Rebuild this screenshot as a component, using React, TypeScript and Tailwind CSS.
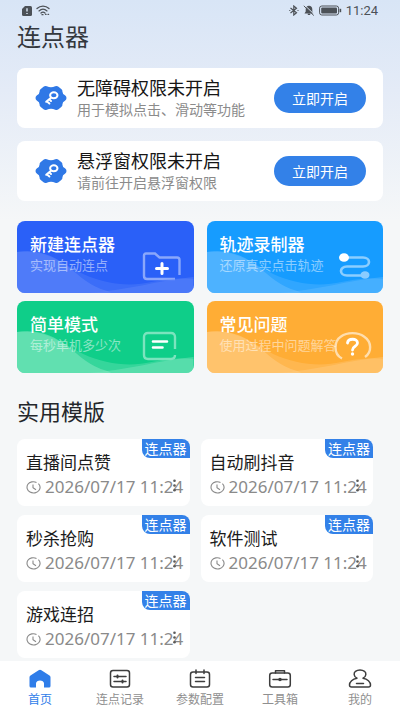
import React from "react";

type TileProps = {
  title: string;
  note: string;
  color: string;
  wave: string;
  icon: React.ReactNode;
};

const permissions = [
  { title: "无障碍权限未开启", note: "用于模拟点击、滑动等功能" },
  { title: "悬浮窗权限未开启", note: "请前往开启悬浮窗权限" },
];

const templates = ["直播间点赞", "自动刷抖音", "秒杀抢购", "软件测试", "游戏连招"];

const StatusBar = () => (
  <div className="flex h-5 items-center justify-between pt-px pr-[5px] pl-[5px] text-[#4c5157]">
    <div className="flex items-center gap-1">
      <svg width="10" height="10" viewBox="0 0 10 10">
        <path d="M3 0h5.500a1.500 1.500 0 0 1 1.500 1.500v7A1.500 1.500 0 0 1 8.500 10h-7A1.500 1.500 0 0 1 0 8.500V3z" fill="currentColor" />
        <path d="M5 2.300v3.200M5 6.900v1.200" stroke="#dde8f6" strokeWidth="1.400" />
      </svg>
      <svg width="15" height="11" viewBox="0 0 15 11" fill="none" stroke="currentColor" strokeWidth="1.300" strokeLinecap="round">
        <path d="M1 3.600C4.500.4 9.500.4 13 3.600M3 5.900c2.400-2.100 5.600-2.100 8 0M5 8c1.200-1 2.800-1 4 0" />
        <path d="M6 9.700h1M9.500 9.300h.6M12 9.300h.6" />
      </svg>
    </div>
    <div className="flex items-center gap-1">
      <svg width="10" height="11" viewBox="0 0 10 11" fill="none" stroke="currentColor" strokeWidth="1.200">
        <path d="M1.500 3l6 4.800L4.800 10V1l2.700 2.200-6 4.800" />
        <path d="M.3 5.500h1M8.500 5.500h1" />
      </svg>
      <svg width="12" height="11" viewBox="0 0 12 11">
        <path d="M6 .8c2 0 3.300 1.400 3.300 3.400v2.300l1.200 1.900h-9l1.200-1.900V4.200C2.700 2.200 4 .8 6 .8z" fill="currentColor" />
        <path d="M4.800 9.300h2.400" stroke="currentColor" strokeWidth="1.400" />
        <path d="M1.800.3l9.800 9.500" stroke="#dde8f6" strokeWidth="1" />
        <path d="M.8.8l10 9.700" stroke="currentColor" strokeWidth="1" />
      </svg>
      <svg width="23" height="11" viewBox="0 0 23 11">
        <rect x=".6" y="1" width="19" height="9" rx="2.200" fill="none" stroke="currentColor" strokeWidth="1" />
        <rect x="2.200" y="2.500" width="15.800" height="6" rx="1" fill="currentColor" />
        <path d="M21.400 3.800v3.400" stroke="currentColor" strokeWidth="1.600" />
      </svg>
      <span className="font-['Roboto',sans-serif] text-[13px] leading-4">11:24</span>
    </div>
  </div>
);

const GearKey = () => (
  <svg className="shrink-0" width="32" height="26" viewBox="0 0 32 26">
    <path
      d="M8.500 1.800Q10 .5 11.800 1.300Q16 3 20.200 1.300Q22 .5 23.500 1.800L26.500 4.200Q27.600 5.200 27.400 6.600Q27.400 9 30 10.300Q31.500 11.300 31.500 13T30 15.700Q27.400 17 27.400 19.400Q27.600 20.800 26.500 21.800L23.500 24.200Q22 25.500 20.200 24.700Q16 23 11.800 24.700Q10 25.500 8.500 24.200L5.500 21.800Q4.400 20.800 4.600 19.400Q4.600 17 2 15.700Q.5 14.700 .5 13T2 10.300Q4.600 9 4.600 6.600Q4.400 5.200 5.500 4.200z"
      fill="#2f78e6"
    />
    <g fill="none" stroke="#fff" strokeWidth="2">
      <ellipse cx="18.800" cy="10.300" rx="3.700" ry="3" />
      <path d="M16 12.700L11.200 16.800M11.800 16.300l2.600 2.200M14.200 14.300l1.800 1.700" strokeLinecap="round" />
    </g>
  </svg>
);

const Tile: React.FC<TileProps> = ({ title, note, color, wave, icon }) => (
  <a
    href="#"
    className={`relative block h-[72px] overflow-hidden rounded-lg pt-3 pl-[13px] ${color}`}
  >
    <svg className="absolute right-[10px] bottom-0.5 h-[42px] w-[42px]" viewBox="0 0 42 42" fill="none">
      {icon}
    </svg>
    <svg
      className={`absolute inset-0 h-full w-full ${wave}`}
      viewBox="0 0 176 72"
      preserveAspectRatio="none"
      fill="currentColor"
    >
      <path d="M0 31C28 28 44 42 66 53C88 63 112 66 134 61C152 57 164 57 176 58V72H0z" opacity=".35" />
      <path d="M0 31C20 28 36 34 50 45C64 56 72 65 90 70L94 72H0z" opacity=".6" />
      <path d="M70 72C108 70 142 59 176 56V72z" opacity=".45" />
    </svg>
    <span className="relative block text-[17px] leading-[22px] font-medium text-white">{title}</span>
    <span className="relative block text-[13px] leading-5 whitespace-nowrap text-white/50">{note}</span>
  </a>
);

const tiles: TileProps[] = [
  {
    title: "新建连点器",
    note: "实现自动连点",
    color: "bg-[#2a60f8]",
    wave: "text-[#5d86fa]",
    icon: (
      <>
        <path d="M2 27V6.500Q2 4.500 4 4.500H13L17.500 8.500H35Q37.500 8.500 37.500 11V26M2 27Q2 30 5 30H33" stroke="#fff" strokeOpacity=".45" strokeWidth="2.400" />
        <path d="M20 14.500v10M14.500 19.500h11" stroke="#fff" strokeWidth="3" strokeLinecap="round" />
      </>
    ),
  },
  {
    title: "轨迹录制器",
    note: "还原真实点击轨迹",
    color: "bg-[#169cff]",
    wave: "text-[#60bbff]",
    icon: (
      <>
        <path d="M13 8.500H32C40 8.500 40 17.500 32 17.500H16C8 17.500 8 26.500 16 26.500H34" stroke="#fff" strokeOpacity=".5" strokeWidth="2.600" />
        <ellipse cx="13" cy="8.500" rx="5" ry="4.300" fill="#fff" />
        <ellipse cx="34" cy="26" rx="4.500" ry="3.800" fill="#8accff" />
      </>
    ),
  },
  {
    title: "简单模式",
    note: "每秒单机多少次",
    color: "bg-[#0fce89]",
    wave: "text-[#7ee6be]",
    icon: (
      <>
        <path d="M33 20V8Q33 4 29 4H6Q2 4 2 8V26Q2 30 6 30H29Q33 30 33 26" stroke="#fff" strokeOpacity=".45" strokeWidth="2.400" />
        <path d="M11 12.500h14M11 18.500h9.500" stroke="#fff" strokeWidth="2.600" strokeLinecap="round" />
      </>
    ),
  },
  {
    title: "常见问题",
    note: "使用过程中问题解答",
    color: "bg-[#ffad35]",
    wave: "text-[#ffcb80]",
    icon: (
      <>
        <path d="M11 29.500C2 25 3 12 10 7.500C16 3 27 3 33 7.500C41 13 41 23 34 28" stroke="#fff" strokeOpacity=".6" strokeWidth="2.400" />
        <path d="M16.500 14C17 9 26.500 9 26.500 14C26.500 17.500 21.500 17 21.500 21" stroke="#fff" strokeWidth="2.800" strokeLinecap="round" />
        <circle cx="21.500" cy="25" r="1.700" fill="#fff" />
      </>
    ),
  },
];

const TemplateCard = ({ title }: { title: string }) => (
  <li className="relative rounded-lg bg-white pt-[11px] pb-[9px] pl-[9px]">
    <span className="absolute top-0 right-0 rounded-tr-lg rounded-bl-lg bg-[#3381e8] px-[3px] text-[14px] leading-[19px] text-white">
      连点器
    </span>
    <h3 className="text-[17px] leading-6 text-[#1b1b1b]">{title}</h3>
    <div className="mt-[3px] flex items-center gap-1 text-[#8a8a8a]">
      <svg className="shrink-0" width="15" height="13" viewBox="0 0 15 13" fill="none" stroke="currentColor" strokeWidth="1.100">
        <path d="M10.500 1.400C7.500 0 3.600.7 1.900 3.300C.2 6 1 9.500 4 11.100C7.200 12.800 11.300 12 13.100 9.200C14.500 7 14.100 4.300 12.400 2.600" />
        <path d="M7 3.500v3.300l3 2" />
      </svg>
      <time className="font-['Noto_Sans',sans-serif] text-[17px] leading-5 whitespace-nowrap">
        2026/07/17 11:24
      </time>
    </div>
    <button aria-label="更多" className="absolute right-[13px] bottom-[14px] text-[#5a5a5a]">
      <svg width="5" height="13" viewBox="0 0 5 13" fill="currentColor">
        <circle cx="2.500" cy="1.700" r="1.300" />
        <circle cx="2.500" cy="6.500" r="1.300" />
        <circle cx="2.500" cy="11.300" r="1.300" />
      </svg>
    </button>
  </li>
);

const navItems = [
  {
    label: "首页",
    icon: (
      <path
        d="M10.600 1.200Q12 .4 13.400 1.200L21.500 6.500Q22.500 7.200 22.500 8.300V17Q22.500 18.500 21 18.500H16V14.500C16 10.500 8 10.500 8 14.500V18.500H3Q1.500 18.500 1.500 17V8.300Q1.500 7.200 2.500 6.500z"
        fill="#2f7de9"
        stroke="none"
      />
    ),
  },
  {
    label: "连点记录",
    icon: (
      <>
        <rect x="2.500" y="1.500" width="19" height="16.500" rx="2.500" />
        <path d="M6 7.500h12M6 12.500h12" />
        <path d="M9.500 6.500v2M14.500 11.500v2" strokeWidth="2" />
      </>
    ),
  },
  {
    label: "参数配置",
    icon: (
      <>
        <rect x="2.500" y="3" width="19" height="15" rx="2.500" />
        <path d="M8 1v3.500M16 1v3.500M7.500 8.500h9M7.500 12.500h9" />
      </>
    ),
  },
  {
    label: "工具箱",
    icon: (
      <>
        <rect x="1.700" y="4" width="20.600" height="14" rx="2.500" />
        <path d="M7.500 4V1.700h9V4M5 10.500h14" />
        <circle cx="12" cy="10.500" r="1" fill="currentColor" />
      </>
    ),
  },
  {
    label: "我的",
    icon: (
      <>
        <path d="M9 9.200C5.500 7.500 5.500 4 7.500 2.300C9.800.5 14.200.5 16.500 2.300C18.500 4 18.500 7.500 15 9.200C19.500 10 22.500 13 22.500 16Q22.500 18 20.500 18H3.500Q1.500 18 1.500 16C1.500 13 4.500 10 9 9.200z" />
        <path d="M8.500 14.500h7" />
      </>
    ),
  },
];

export default function App() {
  return (
    <div className="flex min-h-screen flex-col bg-[#f5f7f8] bg-[linear-gradient(to_bottom,#d8e5f6_0px,#e4ebf7_90px,#f5f7f8_220px)] font-['Noto_Sans_CJK_SC',sans-serif]">
      <main className="flex-1 px-[17px] pb-[3px]">
        <StatusBar />
        <h1 className="mb-4 text-2xl leading-8 text-[#34383e]">连点器</h1>

        <section className="flex flex-col gap-[13px]">
          {permissions.map((p) => (
            <div key={p.title} className="flex items-center rounded-lg bg-white py-2 pr-[17px] pl-[18px]">
              <GearKey />
              <div className="ml-[10px] flex-1 whitespace-nowrap">
                <h2 className="text-lg leading-[22px] text-[#161616]">{p.title}</h2>
                <p className="text-sm leading-[22px] text-[#8b8b8b]">{p.note}</p>
              </div>
              <button className="h-[30px] shrink-0 rounded-full bg-[#3381e8] px-[18px] text-sm text-white">
                立即开启
              </button>
            </div>
          ))}
        </section>

        <section className="mt-5 grid grid-cols-2 gap-x-[13px] gap-y-2">
          {tiles.map((t) => (
            <Tile key={t.title} {...t} />
          ))}
        </section>

        <h2 className="mt-[21px] mb-[13px] text-[22px] leading-8 text-[#24272b]">实用模版</h2>
        <ul className="mr-[10px] grid grid-cols-2 gap-x-[11px] gap-y-[9px]">
          {templates.map((name) => (
            <TemplateCard key={name} title={name} />
          ))}
        </ul>
      </main>

      <nav className="sticky bottom-0 grid grid-cols-5 bg-white pt-2 pb-[5px]">
        {navItems.map((item, i) => (
          <a
            key={item.label}
            href="#"
            className={`flex flex-col items-center gap-[3px] text-xs leading-4 ${i === 0 ? "text-[#2f7de9]" : "text-[#8f8f8f]"}`}
          >
            <svg className="text-[#3d3d3d]" width="24" height="19" viewBox="0 0 24 19" fill="none" stroke="currentColor" strokeWidth="1.500" strokeLinecap="round" strokeLinejoin="round">
              {item.icon}
            </svg>
            {item.label}
          </a>
        ))}
      </nav>
    </div>
  );
}
